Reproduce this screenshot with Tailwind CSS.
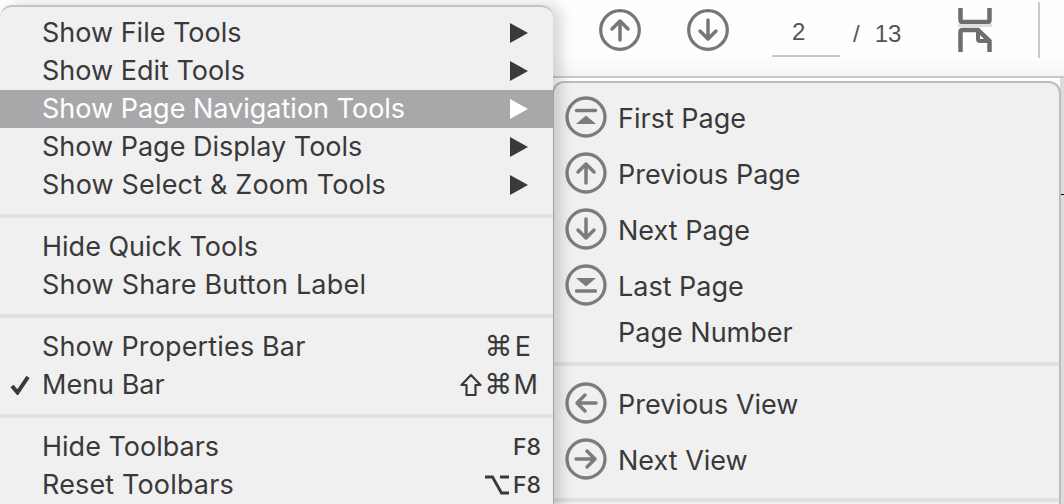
<!DOCTYPE html>
<html><head><meta charset="utf-8">
<script src="https://cdn.jsdelivr.net/npm/@tailwindcss/browser@4"></script>
</head>
<body class="m-0">
<div class="relative w-[1064px] h-[504px] overflow-hidden bg-[#fdfdfd] font-['Inter','Liberation_Sans',sans-serif] text-[27px] text-[#3a393a]">
  <!-- toolbar -->
  <div class="h-[78px] pl-[599px] flex border-b-[2px] border-[#c9c9c9] bg-linear-to-b from-[#fefefe] from-70% to-[#f5f5f5]">
    <div class="flex items-start pt-[9px] gap-[46px]">
      <svg width="42" height="42" viewBox="0 0 42 42" fill="none" stroke="#777" stroke-width="3.300" stroke-linecap="round" stroke-linejoin="round"><circle cx="21" cy="21" r="19.300"/><path d="M21 31V12M13 20l8-8 8 8" stroke-width="3.500"/></svg>
      <svg width="42" height="42" viewBox="0 0 42 42" fill="none" stroke="#777" stroke-width="3.300" stroke-linecap="round" stroke-linejoin="round"><circle cx="21" cy="21" r="19.300"/><path d="M21 11v19M13 22l8 8 8-8" stroke-width="3.500"/></svg>
    </div>
    <div class="ml-[43px] mt-[14px] w-[68px] h-[43px] pl-[20px] border-b-2 border-[#c8c8c8] text-[24px] leading-[36px] text-[#555] font-['Liberation_Sans',sans-serif]">2</div>
    <div class="ml-[13px] mt-[18px] flex gap-[15px] text-[24px] leading-[32px] text-[#555] font-['Liberation_Sans',sans-serif]"><span>/</span><span>13</span></div>
    <svg class="ml-[57px] mt-[8px]" width="34" height="44" viewBox="0 0 34 44" fill="none" stroke="#6e6e6e" stroke-width="4.500"><path d="M2.500 0v12q0 2 2 2h25q2 0 2-2V0"/><path d="M2.500 44V24q0-2 2-2H20l11.500 11v11"/><path d="M20 22v9q0 2 2 2h10" stroke-width="4"/><path d="M0 17.500h34" stroke="#dedede" stroke-width="3"/></svg>
    <div class="ml-[46px] mt-[2px] w-[2px] h-[56px] bg-[#c9c9c9]"></div>
  </div>

  <!-- sliver of the page to the right of the submenu -->
  <div class="absolute left-[1060px] top-[78px] w-[4px] h-[426px] bg-[#dcdcdc]"></div>
  <div class="absolute left-[1060px] top-[194px] w-[4px] h-[1px] bg-black"></div>

  <!-- submenu -->
  <div class="absolute left-[552px] top-[81px] w-[509px] h-[440px] rounded-[12px] bg-[#f0f0f0] border-2 border-[#bdbdbd] border-b-0 pt-[8px]">
    <div class="flex items-center h-[56px]">
      <svg class="ml-[11px] mb-[4px]" width="42" height="42" viewBox="0 0 42 42" fill="none" stroke="#7c7c7c" stroke-width="3.300"><circle cx="21" cy="21" r="19"/><path d="M11.500 14.500h19" stroke-linecap="round"/><path d="M21 19.500l10 8.500H11z" fill="#7c7c7c" stroke="none"/></svg>
      <span class="ml-[11px]">First Page</span>
    </div>
    <div class="flex items-center h-[56px]">
      <svg class="ml-[11px] mb-[4px]" width="42" height="42" viewBox="0 0 42 42" fill="none" stroke="#7c7c7c" stroke-width="3.300" stroke-linecap="round" stroke-linejoin="round"><circle cx="21" cy="21" r="19"/><path d="M21 31V12M13 20l8-8 8 8" stroke-width="3.500"/></svg>
      <span class="ml-[11px]">Previous Page</span>
    </div>
    <div class="flex items-center h-[56px]">
      <svg class="ml-[11px] mb-[4px]" width="42" height="42" viewBox="0 0 42 42" fill="none" stroke="#7c7c7c" stroke-width="3.300" stroke-linecap="round" stroke-linejoin="round"><circle cx="21" cy="21" r="19"/><path d="M21 11v19M13 22l8 8 8-8" stroke-width="3.500"/></svg>
      <span class="ml-[11px]">Next Page</span>
    </div>
    <div class="flex items-center h-[56px]">
      <svg class="ml-[11px] mb-[4px]" width="42" height="42" viewBox="0 0 42 42" fill="none" stroke="#7c7c7c" stroke-width="3.300"><circle cx="21" cy="21" r="19"/><path d="M11.500 27h19" stroke-linecap="round"/><path d="M21 22.500L31 14H11z" fill="#7c7c7c" stroke="none"/></svg>
      <span class="ml-[11px]">Last Page</span>
    </div>
    <div class="flex items-center h-[36px] pl-[64px]">Page Number</div>
    <div class="h-[4px] mt-[11px] mb-[11px] bg-[#e0e0e0]"></div>
    <div class="flex items-center h-[56px]">
      <svg class="ml-[11px] mb-[4px]" width="42" height="42" viewBox="0 0 42 42" fill="none" stroke="#7c7c7c" stroke-width="3.300" stroke-linecap="round" stroke-linejoin="round"><circle cx="21" cy="21" r="19"/><path d="M31 21H12M20 13l-8 8 8 8" stroke-width="3.500"/></svg>
      <span class="ml-[11px]">Previous View</span>
    </div>
    <div class="flex items-center h-[56px]">
      <svg class="ml-[11px] mb-[4px]" width="42" height="42" viewBox="0 0 42 42" fill="none" stroke="#7c7c7c" stroke-width="3.300" stroke-linecap="round" stroke-linejoin="round"><circle cx="21" cy="21" r="19"/><path d="M11 21h19M22 13l8 8-8 8" stroke-width="3.500"/></svg>
      <span class="ml-[11px]">Next View</span>
    </div>
    <div class="h-[4px] mt-[9px] bg-[#e0e0e0]"></div>
  </div>

  <!-- main menu -->
  <div class="absolute left-0 top-[5px] w-[553px] h-[520px] rounded-[12px] bg-[#f0f0f0] border-t-2 border-[#c4c4c4] pt-[7px] shadow-[8px_0_14px_rgba(0,0,0,0.16)]">
    <div class="h-[38px] pl-[42px] pr-[25px] flex items-center justify-between"><span>Show File Tools</span><svg width="18" height="20" viewBox="0 0 18 20"><path d="M0 0l18 10L0 20z" fill="#3a393a"/></svg></div>
    <div class="h-[38px] pl-[42px] pr-[25px] flex items-center justify-between"><span>Show Edit Tools</span><svg width="18" height="20" viewBox="0 0 18 20"><path d="M0 0l18 10L0 20z" fill="#3a393a"/></svg></div>
    <div class="h-[38px] pl-[42px] pr-[25px] flex items-center justify-between bg-[#a8a8ab] text-white"><span>Show Page Navigation Tools</span><svg width="18" height="20" viewBox="0 0 18 20"><path d="M0 0l18 10L0 20z" fill="#fff"/></svg></div>
    <div class="h-[38px] pl-[42px] pr-[25px] flex items-center justify-between"><span>Show Page Display Tools</span><svg width="18" height="20" viewBox="0 0 18 20"><path d="M0 0l18 10L0 20z" fill="#3a393a"/></svg></div>
    <div class="h-[38px] pl-[42px] pr-[25px] flex items-center justify-between"><span class="tracking-[0.17px]">Show Select &amp; Zoom Tools</span><svg width="18" height="20" viewBox="0 0 18 20"><path d="M0 0l18 10L0 20z" fill="#3a393a"/></svg></div>
    <div class="h-[4px] my-[10px] bg-[#e0e0e0]"></div>
    <div class="h-[38px] pl-[42px] flex items-center">Hide Quick Tools</div>
    <div class="h-[38px] pl-[42px] flex items-center"><span class="tracking-[0.2px]">Show Share Button Label</span></div>
    <div class="h-[4px] my-[10px] bg-[#e0e0e0]"></div>
    <div class="h-[38px] pl-[42px] pr-[22px] flex items-center justify-between"><span class="tracking-[0.15px]">Show Properties Bar</span><span class="flex items-center gap-[2px]"><span class="font-['DejaVu_Sans',sans-serif] text-[28px] leading-none">⌘</span><span>E</span></span></div>
    <div class="relative h-[38px] pl-[42px] pr-[15px] flex items-center justify-between">
      <svg class="absolute left-[10px] top-[10px]" width="20" height="19" viewBox="0 0 20 19" fill="none" stroke="#3a393a" stroke-width="4"><path d="M2 10l5.500 6.500L18 1"/></svg>
      <span>Menu Bar</span>
      <span class="flex items-center gap-[1px]"><svg class="mr-[2px]" width="22" height="24" viewBox="0 0 22 24" fill="none" stroke="#3a393a" stroke-width="2.200" stroke-linejoin="round"><path d="M11 2L1.500 12H6.500V22H15.500V12H20.500z"/></svg><span class="font-['DejaVu_Sans',sans-serif] text-[28px] leading-none">⌘</span><span>M</span></span>
    </div>
    <div class="h-[4px] my-[10px] bg-[#e0e0e0]"></div>
    <div class="h-[38px] pl-[42px] pr-[12px] flex items-center justify-between"><span>Hide Toolbars</span><span class="text-[23px] font-medium">F8</span></div>
    <div class="h-[38px] pl-[42px] pr-[12px] flex items-center justify-between"><span class="tracking-[0.15px]">Reset Toolbars</span><span class="flex items-center gap-[4px] text-[23px] font-medium"><svg width="24" height="20" viewBox="0 0 24 20" fill="none" stroke="#3a393a" stroke-width="2.800"><path d="M0 2h7.500l9 16H24M15 2h9"/></svg><span>F8</span></span></div>
  </div>
</div>
</body></html>
